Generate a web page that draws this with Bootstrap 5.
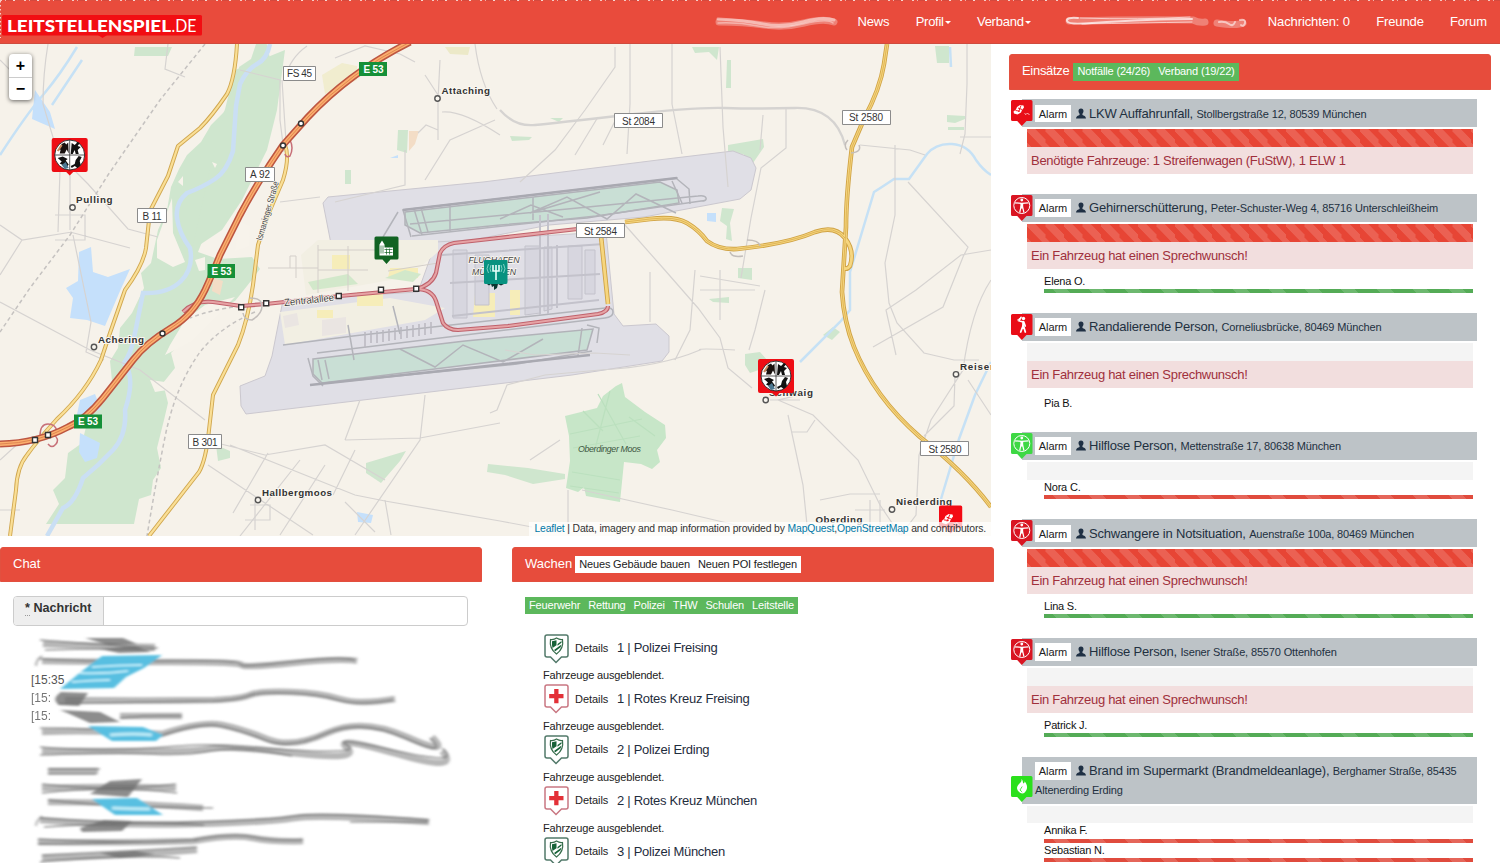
<!DOCTYPE html>
<html lang="de">
<head>
<meta charset="utf-8">
<title>Leitstellenspiel.de</title>
<meta name="viewport" content="width=device-width, initial-scale=1">
<link rel="stylesheet" href="https://cdn.jsdelivr.net/npm/bootstrap@5.3.0/dist/css/bootstrap.min.css">
<style>
body{font-family:"Liberation Sans",Arial,sans-serif;font-size:13px;line-height:1.43;color:#222;background:#fff;height:863px;overflow:hidden}
.topnav{height:44px;background:#e94b3c;border-bottom:1px solid #cf4b3e;padding:0;position:relative}
.topnav::before{content:"";position:absolute;left:0;right:0;top:0;height:1px;background:repeating-linear-gradient(90deg,#f6c9c4 0 2px,#e94b3c 2px 5px,#f3b0a8 5px 6px,#d5493d 6px 13px,#f8d6d2 13px 15px,#e0503f 15px 24px)}
.topnav .navbar-nav .nav-link{color:#fff;padding:1px 13.1px 0;line-height:44px;letter-spacing:-.12px;white-space:nowrap}
.topnav .navbar-nav .dropdown-toggle{letter-spacing:-.25px}
.topnav .dropdown-toggle::after{margin-left:1px;border-width:3.5px;vertical-align:2px}
.brandmark{display:block;width:204px;height:44px}
.leftside{width:994px}
.mapbox{width:991px;height:492px;position:relative;overflow:hidden;background:#f6f3eb}
.zoomctl{position:absolute;left:9px;top:10px;width:23px;border-radius:4px;background:#fff;box-shadow:0 1px 4px rgba(0,0,0,.6)}
.zoomctl a{display:block;height:23px;line-height:24px;text-align:center;font-weight:bold;font-size:16px;color:#000;text-decoration:none}
.zoomctl a+a{border-top:1px solid #ccc;line-height:22px}
.attrib{position:absolute;right:0;bottom:0;height:14px;line-height:14px;font-size:10.4px;letter-spacing:-.15px;padding:0 5px;background:rgba(255,255,255,.72);color:#333;white-space:nowrap}
.attrib a{color:#0078a8;text-decoration:none}
.redhead{background:#e74c3c;color:#fff;height:35.5px;border-radius:3px 3px 0 0;padding:0 12px;font-size:13px;border:1px solid #e2503f;letter-spacing:-.3px}
.wide{letter-spacing:0}
.chatcol{width:482px}
.stationcol{width:482px;margin-left:30px}
.tagrow{height:17.5px;line-height:17px;font-size:11px;white-space:nowrap;letter-spacing:-.16px}
.tagrow span{padding:0 4px;display:inline-block}
.tagwhite{background:#fff;color:#222}
.taggreen{background:#5cb85c;color:#fff}
.msgrow{margin:14px 14px 0 13px;height:30px;border:1px solid #ccc;border-radius:4px;overflow:hidden}
.msgrow .msglabel{width:90px;background:#eee;border-right:1px solid #ccc;font-weight:bold;font-size:12.6px;padding:2.4px 0 0 11px;color:#333}
.msglabel abbr{text-decoration:none;border-bottom:1px dotted #999}
.smear{display:block;margin-top:8px}
.stations{padding:18px 0 0 31px}
.station{height:50.9px}
.station .toprow{height:33px}
.station .det{font-size:11px;width:47px;padding-left:5px;flex-shrink:0;letter-spacing:-.05px}
.station .nm{font-size:13px;color:#1f2d3d;white-space:pre;letter-spacing:-.28px}
.station .hid{font-size:11px;line-height:14px;margin-top:3px;letter-spacing:-.16px}
.missioncol{width:482px;margin-left:15px;padding-top:10px}
.einsatzhead{margin-bottom:9.5px}
.mission{padding-left:13px;margin-right:14px;margin-bottom:19.7px}
.mhead{background:#bdc3c7;min-height:28.4px;position:relative;padding:5.5px 0 0 13px;color:#22303f;font-size:13px;line-height:18.6px;letter-spacing:-.19px}
.mhead.tall{height:46.8px}
.mhead .pin{position:absolute;left:-11px;top:1px}
.mhead.tall .pin{top:19px}
.mhead .alarm{display:inline-block;background:#fff;color:#222;font-size:11px;height:17.5px;line-height:18.5px;width:36px;text-align:center;margin-right:5px;vertical-align:top;letter-spacing:-.05px}
.mhead .usr{width:10px;height:11px;vertical-align:-1px;margin-right:3px}
.mhead .adr{font-size:11px;letter-spacing:-.15px}
.mbody{margin:2px 4px 0 5px}
.mbar{height:17.8px;background:#f4f4f4}
.stripe{background-image:linear-gradient(45deg,rgba(255,255,255,.15) 25%,transparent 25%,transparent 50%,rgba(255,255,255,.15) 50%,rgba(255,255,255,.15) 75%,transparent 75%)}
.mbar.stripe{background-color:#e74535;background-size:18.5px 24px}
.malert{height:27px;line-height:28px;background:#f2dede;color:#a0303c;padding-left:4px;font-size:13px;white-space:nowrap;letter-spacing:-.29px}
.malert+.veh{margin-top:4.5px}
.veh{margin-left:17px;height:19.5px;font-size:11px;line-height:14px;color:#111;letter-spacing:-.2px}
.veh i{display:block;height:4.3px;margin-top:1.2px;background-size:36px 18px}
.veh.idle{padding-top:4px}
.bar-ok{background-color:#54ab56}.bar-far{background-color:#e04b3d}
</style>
</head>
<body>
<svg width="0" height="0" class="position-absolute">
<defs>
<g id="pin"><path d="M1.500 0h18.500q1.500 0 1.500 1.500v18q0 1.500-1.500 1.500h-4.500l-4.700 5-4.600-5H1.500q-1.500 0-1.500-1.500v-18Q0 0 1.500 0z"/></g>
<g id="man" fill="none" stroke="#fff"><circle cx="10.800" cy="10.500" r="8" stroke-width="1"/><circle cx="10.800" cy="5" r="1.400" fill="#fff" stroke="none"/><path d="M4 7.800l6.800.6 6.800-.6M10.200 11l-1.500 6.500M11.400 11l1.500 6.500" stroke-width="1.200"/><path d="M9.300 8h3l-.3 5.500h-2.400z" fill="#fff" stroke="none"/></g>
<g id="crash"><path d="M2.500 11.500l2.500-2 1-2.500 3-2 3.500.5.500 2-2 2.500-1 2.500-3.500 2-3.500-1z" fill="#fff"/><path d="M4.500 10.500l4.500.7M7 8l4 1.500M10 5.500l-2.500 6.500" stroke="#f30a14" stroke-width=".9"/><path d="M13.500 13.500l1.500 1 1.500-1.500 2 2" stroke="#fff" stroke-width=".7" fill="none"/></g>
<g id="bat" fill="none" stroke="#fff" stroke-linecap="round"><circle cx="12.500" cy="4.500" r="1.700" fill="#fff" stroke="none"/><path d="M12 7.500v5.500M12 8L8 6.800l2-3.500M12.800 8l1.400 4" stroke-width="1.700"/><path d="M12 12l-2.300 6M12.500 12l1.800 6" stroke-width="1.800"/><path d="M9.500 4L6.500 6" stroke-width="1"/></g>
<g id="flame"><path d="M10.500 3c2 2.500 1 3.500 2 4.500 1-.5 1.200-1.300 1-2.300 3 3.300 4 8-.3 11.800-1 .6-3 .5-4.200-.3-4-3-3.500-6.200-1.200-8.500C9.500 6.500 11 5.500 10.500 3z" fill="#fff"/><path d="M11.200 10.500l-2.200 3.500 2.200 2" stroke="#2be01c" stroke-width=".8" fill="none"/></g>
<symbol id="usr" viewBox="0 0 14 14"><path d="M7 0c2.300 0 3.700 1.600 3.500 4-.2 1.700-.8 2.700-1.500 3.500v1.700c1.800.8 4.800 1.500 5 4.800H0c.2-3.300 3.200-4 5-4.800V7.500C4.300 6.700 3.700 5.700 3.500 4 3.300 1.600 4.700 0 7 0z" fill="#1f3044"/></symbol>
<g id="fire"><path d="M2 0h32q2 0 2 2v30q0 2-2 2H21.500L18 37.500 14.500 34H2q-2 0-2-2V2Q0 0 2 0z" fill="#ee0d14"/><circle cx="18" cy="17" r="15" fill="#fff" stroke="#222" stroke-width=".9"/><path d="M18 2v30M3 17h30" stroke="#333" stroke-width=".8"/><path d="M10 6l3-1.500 1.500 2 2-2 .5 11-2-4-2 4H8l1-4-2 1 1-3z" fill="#18110e"/><path d="M6 13l4-6" stroke="#c98a5c" stroke-width="2"/><path d="M20 5l3 2 3-3 2 1-2 3 3 1-3 3 1 4h-3l-1-4-2 4h-2z" fill="#111"/><path d="M6 20l5-1.500 5 2.500-2 1.500 3 4-3 4-2-3-4-2 2-2z" fill="#111"/><path d="M10 27l4-3 3 6-4 1z" fill="#4c7892"/><path d="M19 28l4-2 1-4 3-4 3 1-2 4 1 4-3 3-3-2-3 2z" fill="#111"/></g>
</defs>
</svg>

<nav class="navbar topnav navbar-expand flex-nowrap">
<a class="brandmark" href="#" aria-label="Leitstellenspiel.de"><svg width="204" height="44"><rect x="2" y="15" width="200" height="20.500" rx="1.500" fill="#f20d12"/><path d="M98 35h9l-4.500 3z" fill="#f20d12"/><g font-family="Lato,sans-serif" font-size="17.500" fill="#fff"><text x="7" y="31.500" font-weight="900" textLength="164" lengthAdjust="spacingAndGlyphs">LEITSTELLENSPIEL</text><text x="171.500" y="31.500" textLength="25" lengthAdjust="spacingAndGlyphs">.DE</text></g><path d="M.500 1v37" stroke="#f8cfc9" stroke-dasharray="1.500 2.500"/></svg></a>
<svg class="ms-auto flex-shrink-0" width="124" height="20" fill="none" stroke="#fff" stroke-linecap="round"><path d="M4 10q25 0 45 3t40-2 30-1" stroke-width="7" opacity=".3"/><path d="M3 7q25 1 45 5t40-2 31-2" stroke-width="3" opacity=".45"/><path d="M3 11q20-1 40 3t45-2 30-1" stroke-width="1.500" opacity=".4"/></svg>
<ul class="navbar-nav" style="margin-left:5px">
<li class="nav-item"><a class="nav-link" href="#">News</a></li>
<li class="nav-item"><a class="nav-link dropdown-toggle" href="#">Profil</a></li>
<li class="nav-item"><a class="nav-link dropdown-toggle" href="#">Verband</a></li>
</ul>
<svg class="flex-shrink-0" style="margin:0 5px 0 18px" width="188" height="20" fill="none" stroke="#fff" stroke-linecap="round"><path d="M7 9q70-2 124-1 6 3 12 2M155 11q20 3 26 0" stroke-width="7" opacity=".3"/><path d="M16 6Q4 5 5 9t25 2q60-4 100-4" stroke-width="2" opacity=".7"/><path d="M20 12q60-1 110-2M18 6q60 2 110-1" stroke-width="1" opacity=".6"/><path d="M157 10q6-1 10 2t6-2M178 8q6-1 5 3t-4 2" stroke-width="2" opacity=".55"/></svg>
<ul class="navbar-nav">
<li class="nav-item"><a class="nav-link wide" href="#">Nachrichten: 0</a></li>
<li class="nav-item"><a class="nav-link" href="#">Freunde</a></li>
<li class="nav-item"><a class="nav-link" href="#">Forum</a></li>
</ul>
</nav>

<div class="d-flex">
<main class="leftside flex-shrink-0">
<div class="mapbox">
<svg width="991" height="492" viewBox="0 44 991 492" font-family="Liberation Sans,Arial,sans-serif">
<rect y="44" width="991" height="492" fill="#f6f2ea"/>
<!-- flood plain and woods -->
<g fill="#cfe6ce">
<path d="M256 44l-5 15-12 8 2 15-12 3 4 14-10 14-12 12-10 17-14 13-8 14-8 18-4 23-9 20-7 33-10 10 3 15-12 25-12 15-2 20-8 13 2 20-10 22-12 8-8 32-14 10-3 25-12 12 6 14-13 20h88l5-25 12-4 2-15 8-12-4-20 7-28 4-17-5-20 12-15-4-15 20-20 2-15 22-8 20-9 12-15 13-17-8-12-34 2-20-7 10-25 15-20 13-8 9-17-4-14-12 3 4-18 16-12 6-18-3-15 12-18-4-12 10-20-4-17 14-12 2-14-3-12 6-12-4-14 8-16z"/>
<path d="M235 70l50-20-8 60-10 40-25 50-20 30-30 20 20-90z"/>
<path d="M135 47h37l-4 9h-34zM398 130h10l-1 23-10-3zM345 170h6v14h-6zM692 47h27l-2 13-8-8-14 1zM727 60h4v28h-5zM728 145l35-6 1 8-11 16-10-9-15-1zM722 208l12 1-4 14 2 18-6-2 1-13-7-5zM738 268h14v12l-14-2zM745 354l15-2 8 9-6 8-12 4-5-8zM366 463l40-12-6 10-19 22-15-10zM216 445l14 6v7l-12 3zM947 115l18 1v3l-10 4-8-1zM948 127h16v3h-16zM935 46h14v17h-12zM823 335l10-8 7 5-8 8zM550 118h13l-4 4zM510 136l22 1-3 3-17 1z"/>
<path d="M565 416l32-8 6-12 13-10 6-3 3 14 20 15 20 13 1 13-9 12 3 12-8 7-11-5-17-2-4 40-34-6-2-9-6 5-12-4 4-27-1-25-4-20z" fill="#c7e6c8"/>
<path d="M488 464l40 4 37 6v5l-32 5-28-9-18-3zM709 299l20-2v6l-16-1z"/>
</g>
<path d="M409 131h10l-4 13-6 7zM213 278l10 3-3 14-8-4z" fill="#f3ddc6"/>
<path d="M322 75l20-12 15 3v14l-32 14z" fill="#f1edcf"/><path d="M445 47l25 0-2 8-18-1z" fill="#ece9c8"/>
<path d="M570 434l72-15m-69 29 67-12m-68 36 48 8m-50 6 49 7m-21-99 28 50m-16-53-16 62m35-36 26 19M583 411l20 20" stroke="#bbe0be" stroke-width="1.200"/>
<g fill="#f7f3eb"><path d="M157 240l15-42 1 35 12 29-12 5-16-9zM240 222l10 4-1 20-14 5zM170 345l15-25 20-15 30-8-45 45-25 13zM195 260l10-3v13l-6 1zM178 182l5-6v10zM212 162l5 2-2 4zM150 380l15 2 2 8-12 2z"/></g>
<!-- water -->
<g fill="none" stroke="#cadff4"><path d="M270 44q-3 15-13 20t-17 20l-4 22-3 45q-6 20-18 28t-28 14q-12 10-10 25t13 30q4 20-9 33t-38 12l-9 45q-3 15-10 25 12 14 1 47 2 25-12 40t-30 28q-8 25-20 30L47 536" stroke-width="4.500"/>
<path d="M77 47Q60 75 43 95T0 155M82 60l-30 45M991 175q-8-5-15-15-8-15-24-16t-25 10l-18 25h-15q-15 10-20 13l-12 40-12 40v38l-10 12-40 40M991 362l-16 33-16 44-18 60M950 47l1 20" stroke="#c6e1f5" stroke-width="2.500"/></g>
<path d="M79 252l12-5 2 25 15 5 22-8-10 22-15 35-18-6-17-2 3-20-7-10 12-7zM35 90l15 22 5 17-23-10zM80 400l15-6 6 16-13 2-12 7zM80 433l20 10-3 15-12 4-6-10zM357 512l16 3-2 8-13-1zM707 213h9v9l-9-1zM390 158l8-3v3z" fill="#c5e0fb"/>
<!-- airport aprons -->
<g stroke="#cbc8cf" fill="#e0dfe6"><path d="M323 203l5-6 155-15 175-22 75-9 18 7 5 10-5 22-11 9-96 18-95 8-117 23-99 6z"/><path d="M283 300l135-8 18-50 170-10 8 82 9 12 33-2 13 12v16l-7 9-90 14-326 39-5-8-1-20 25-10 7-20z"/></g>
<g fill="#f2efe3"><path d="M318 240h120v12l-30 25-102 18-5-40zM280 312l110-14 55 10-20 12-140 25z"/></g>
<path d="M332 255h18v14h-18zM390 268h28v10h-30zM357 292h26v14h-26zM317 310h16v8h-16zM475 293h20v24h-22zM510 290h10v25h-10z" fill="#f6edb9"/>
<path d="M283 316l14-3 2 12-14 3zM322 320l24-3v16l-24 3z" fill="#eae5e2"/>
<path d="M308 282l40-8 10 10-45 6zM385 278l20-8 16 4-8 8z" fill="#d2e8ca"/>
<path d="M318 245v48m0-43h65m-65 20h50m-20-24v45m40-20 50-8M318 268l-50 0M290 268v-12h6v22" fill="none" stroke="#d4cfca"/>
<g fill="#c9dfd5" stroke="#b1b2b8" stroke-width="1.500"><path d="M405 212l255-30 17 8 2 13-92 15-87 7-80 8-15-8z"/><path d="M313 359l152-18 128-12-6 21-120 15-145 18-9-9z"/></g>
<g fill="none" stroke="#b3b4ba" stroke-width="1.500">
<path d="M402 210l276-32M412 236l184-20 105-15q6 0 5-3t-8-2l-110 11-178 17M403 210l8 27m3-28 8 26m-1-27 7 24M398 212l-15 25M600 192l-70 21 37-16 40 22 29-25 40 19M672 181l10 22m-5-24 12 10 1 15M533 197v23M450 204v27M500 219l31-14 32 12"/>
<path d="M283 345l70-9 80-9 172-19q8-1 8 4t-8 6l-288 35M317 384l200-20 75-13M308 358l5 18 10 10m-5-26 4 20m3-20 4 19M400 349l35 18 28-22 40 17 40-23M587 325l12 3-2 15m-15-15-4 28M354 360l-6-35M400 334l-7-28"/>
</g>
<path d="M310 385l280-30M403 210l274-32" stroke="#a9a9b1" stroke-width="2.500"/>
<g stroke="#c3c2cb" fill="#d7d6df"><path d="M453 250h14v68h-14zM475 255h14v50h-14zM525 246h15v67l-15 2zM544 247h8v62l-8 2zM568 246h14v53h-14zM585 250h10v44h-10z"/><path d="M540 215v100M548 214v100M442 255l162-11M450 283l150-9M452 316l147-16M557 245v63" fill="none" stroke-width="2"/></g>
<path d="M365 332v16m6-17v12m6-12v12m6-13v12m6-13v12m6-13v12m6-13v12m6-13v12m6-13v12m6-13v12m6-13v12m6-13v12" stroke="#b9b8c0" stroke-width="1.500"/>
<!-- minor roads -->
<g fill="none" stroke="#d6d3d1" stroke-width="1.200">
<path d="M48 44q-5 30-5 60l15 50 30 30 40 45 30 8M0 225l22 15 50-8M22 240L0 275M60 170l-2 62M70 165v65m-15-15h30v25H55M70 232l60 16M73 235l18 87-5 30 18 8M0 302l90 48 50 20 65 50M240 70l40 10v40l4 32M0 60l25 25M168 44l-3 25 20 8M282 80l4 62M285 78q5-20 22-32M335 58l30-12 35 8M400 54l15 8M438 98v42M438 130l-12-5-8 8M442 112q20-2 58 23M440 60l-2 40M405 150v35l-70 17M475 44q5 40 22 65M425 180l25-40 45-20M425 75l13 20M230 445l125 50 30 6 115 20 32 6M208 465l45 30 60 40M205 440l60 15 60-10 60 35M268 453l-35 60M300 460l-60 76M325 465l-45 70M355 450l-22 45M355 535l65-95 5-45M345 440l15-40M345 440l75-2 80-15M385 500l6 35M280 202l40-5M615 47v20l-30 43-30 40-35 32M630 44v60l-3 50M672 44v60l10 50M720 47l3 80 5 60M786 108v40l-25 20-10 50-10 60M763 115l-3 35M575 155l23-38M603 145l15-30M625 225l38 43 35 40 22 30 8 30 24 20M735 350q-40-2-35 0-40 17-100 20l-55 5-38 10-10 25-7 3M895 145v70l-10 48 4 40 8 20 27 30 30 7 25 0M908 182l60 65-5 10-20 50-70 40M967 44v40l-2 50-5 20M960 137h31M991 250l-30 5-45 35-30 20 10 45M991 280q-20 30-28 90l-32 50-12 35-3 60-15 20M955 376l-1 30-30 30M968 380l23 35M800 395l-22 5 35 15 45 45 22 45 20 30M770 400l30 0M788 415l15 70 5 50M860 145l50 5 15 5M695 270l-5 60-15 30M765 290l-10 40-6 20M568 490l0 45M582 490l90 20 85 20M345 502l30 30M0 460l22-20M0 510h20M650 272v50M505 350l30 5 60-2 35 2"/>
<path d="M820 500l30-6h30M880 500v30h-30v-10m5-10h30m-15-10v30M250 505h20v15h-25m10-20v30M700 276l60 10M700 290h55M720 270v50M815 420l-8 12h-15M530 460l30-20"/>
</g>
<path d="M500 110q15 17 35 15t90-10 100-7 70 0 50 37" fill="none" stroke="#d5d3d1" stroke-width="2.300"/>
<g fill="none" stroke="#c5c2c0" stroke-width="1.500" stroke-dasharray="4 3"><path d="M205 44L160 100 108 175 70 235 30 288 0 332M255 312q-35 15-55 40-25 35-35 85T147 536M240 306q-30 4-50 12"/></g>
<!-- main roads -->
<g fill="none" stroke-linejoin="round">
<path d="M237 44q-2 35-10 50-15 22-27 34l-22 18-10 30-18 35-4 37q-3 18-21 42l-15 43-9 27q-15 32-44 59-20 22-30 36-10 12-11 35l-6 46M285 145q5 12-2 35l-15 35-10 30-5 40q-5 35-15 60l-25 50-4 35q-3 30-10 42l-50 64" stroke="#d0a750" stroke-width="4"/>
<path d="M887 44l-3 20q-4 25-20 55l-12 28q-6 50-6 80l-4 65q2 30 12 55 20 50 66 90 45 35 71 70M625 222l25-3q25-3 37 4t20 18q12 9 30 8 50-5 78-17 20-7 30 6t5 28q-3 4-6 2M601 236l7 68" stroke="#d0a345" stroke-width="4.600"/>
<path d="M237 44q-2 35-10 50-15 22-27 34l-22 18-10 30-18 35-4 37q-3 18-21 42l-15 43-9 27q-15 32-44 59-20 22-30 36-10 12-11 35l-6 46M285 145q5 12-2 35l-15 35-10 30-5 40q-5 35-15 60l-25 50-4 35q-3 30-10 42l-50 64" stroke="#fadf96" stroke-width="2.200"/>
<path d="M887 44l-3 20q-4 25-20 55l-12 28q-6 50-6 80l-4 65q2 30 12 55 20 50 66 90 45 35 71 70M625 222l25-3q25-3 37 4t20 18q12 9 30 8 50-5 78-17 20-7 30 6t5 28q-3 4-6 2M601 236l7 68" stroke="#f6d67f" stroke-width="2.800"/>
<path d="M625 222l25-3q25-3 37 4t20 18q12 9 30 8 50-5 78-17 20-7 30 6M887 44l-3 20q-4 25-20 55l-12 28q-6 50-6 80l-4 65q2 30 12 55 20 50 66 90 45 35 71 70" stroke="#d6a747" stroke-width=".7"/>
<path d="M183 312q12-12 30-10l28 4 25-2 74-8 76-7q16-4 20-16l4-20q4-8 14-10l150-17M416 289q16 0 20 12l7 22q5 7 15 7l50-4 90-12q10-2 10-8" stroke="#c0626c" stroke-width="4.200"/>
<path d="M183 312q12-12 30-10l28 4 25-2 74-8 76-7q16-4 20-16l4-20q4-8 14-10l150-17M416 289q16 0 20 12l7 22q5 7 15 7l50-4 90-12q10-2 10-8" stroke="#e6a3a5" stroke-width="2"/>
<path d="M290 140q4 8 0 16-4 2-5-2M40 436q0-12 8-12t9 8m-9 12q4 5 8 0t-3-10" stroke="#c77078" stroke-width="1.500"/>
<path d="M250 298q12 0 12 8t-10 14q-8 0-9-7M747 240q12 0 13 6m-30 6q2 6 13 4M848 140q-5 5-1 10m12-5q3 7-8 8" stroke="#c3bebb" stroke-width="1.500"/>
<path d="M410 42q-60 30-102 75l-25 28q-25 36-43 70l-20 40q-8 20-15 35-12 25-34 38-25 15-38 32l-30 38q-18 22-35 29-30 16-68 17" stroke="#bd5641" stroke-width="7"/>
<path d="M410 42q-60 30-102 75l-25 28q-25 36-43 70l-20 40q-8 20-15 35-12 25-34 38-25 15-38 32l-30 38q-18 22-35 29-30 16-68 17" stroke="#fbae6d" stroke-width="3.900"/>
<path d="M410 42q-60 30-102 75l-25 28q-25 36-43 70l-20 40q-8 20-15 35-12 25-34 38-25 15-38 32l-30 38q-18 22-35 29-30 16-68 17" stroke="#d87b4b" stroke-width=".8"/>
</g>
<g fill="#fff" stroke="#333" stroke-width="1.400"><circle cx="301" cy="123.500" r="2.500"/><circle cx="283" cy="145.500" r="2.500"/><circle cx="162.500" cy="333.500" r="2.500"/><path d="M238.700 304.700h5v5h-5zM263.700 300.700h5v5h-5zM336.300 293.500h5v5h-5zM378.500 287.300h5v5h-5zM413.700 286.300h5v5h-5zM32.500 437.500h5v5h-5zM45.500 432.500h5v5h-5z"/><g fill="#f9f6ef" stroke="#555"><circle cx="437.500" cy="98.500" r="2.700"/><circle cx="72.500" cy="207.500" r="2.700"/><circle cx="94" cy="347" r="2.700"/><circle cx="258" cy="500" r="2.700"/><circle cx="765.700" cy="400" r="2.700"/><circle cx="956" cy="374.300" r="2.700"/><circle cx="892" cy="509.500" r="2.700"/></g></g>
<!-- shields -->
<g fill="#fff" stroke="#8b8b8b"><path d="M283.500 66.500h32v14h-32zM245.500 167.500h29v14h-29zM137.500 208.500h29v14h-29zM188.500 434.500h33v14h-33zM614.500 113.500h48v14h-48zM842.500 110.500h48v14h-48zM576.500 223.500h48v14h-48zM920.500 441.500h48v14h-48z"/></g>
<g fill="#159038"><path d="M359 62h28v14h-28zM207.500 264h27.500v14h-27.500zM74 414.500h28v14h-28z"/></g>
<g font-size="10" text-anchor="middle" fill="#333"><text x="299.500" y="77" textLength="25">FS 45</text><text x="260" y="178" textLength="20">A 92</text><text x="152" y="219.500" textLength="19">B 11</text><text x="205" y="445.500" textLength="25">B 301</text><text x="638.500" y="124.500" textLength="33">St 2084</text><text x="866" y="121" textLength="34">St 2580</text><text x="600.500" y="234.500" textLength="33">St 2584</text><text x="945" y="452.500" textLength="33">St 2580</text>
<g fill="#fff" font-weight="bold"><text x="373.500" y="72.500" textLength="20">E 53</text><text x="221.500" y="275" textLength="20">E 53</text><text x="88" y="425.300" textLength="20">E 53</text></g></g>
<g font-size="9.800" font-weight="bold" fill="#333" stroke="#faf7f0" stroke-width="2" paint-order="stroke"><text x="441.500" y="94" textLength="48.500">Attaching</text><text x="76" y="203" textLength="36.500">Pulling</text><text x="98" y="343" textLength="46">Achering</text><text x="262" y="495.500" textLength="70">Hallbergmoos</text><text x="769" y="395.500" textLength="44">Schwaig</text><text x="960" y="370" textLength="36">Reisen</text><text x="896" y="505" textLength="56">Niederding</text><text x="815.500" y="523" textLength="47">Oberding</text></g>
<g fill="#444" stroke="#faf7f0" stroke-width="1.500" paint-order="stroke"><text transform="translate(262 241) rotate(-74)" font-size="9" textLength="61" lengthAdjust="spacingAndGlyphs">Ismaninger Straße</text><text transform="translate(284.500 306) rotate(-6)" font-size="10" textLength="50" lengthAdjust="spacingAndGlyphs">Zentralallee</text><g font-style="italic" font-size="8.800"><text x="468.500" y="263" textLength="51">FLUGHAFEN</text><text x="472" y="275" textLength="44">MÜNCHEN</text><text x="578" y="452" textLength="63" stroke="none" fill="#3d5742">Oberdinger Moos</text></g></g>
<!-- markers -->
<use href="#fire" x="51.700" y="138"/><use href="#fire" x="758" y="359"/>
<g transform="translate(374.500 236.500)"><path d="M1.500 0h21q1.500 0 1.500 1.500v20q0 1.500-1.500 1.500H16l-4 4.500L8 23H1.500Q0 23 0 21.500v-20Q0 0 1.500 0z" fill="#116322"/><path d="M5 19V8l2.500-4L10 8v3h8.500v8z" fill="#fff"/><path d="M6.500 9v8m2-8v8M10 13h8m-8 3h8m-6-4v6m3-6v6" stroke="#116322" stroke-width=".7"/></g>
<g transform="translate(484 260)"><path d="M1 0h21.500q1 0 1 1v21q0 2-1.500 2H1.500Q0 24 0 22.500V1q0-1 1-1z" fill="#079280"/><path d="M9 5v6h6V5M12 5v15" fill="none" stroke="#e8fffb" stroke-width="1.600"/><path d="M7 5q-2 4 0 7M4.500 4q-3 5 0 9M17 5q2 4 0 7M19.500 4q3 5 0 9" fill="none" stroke="#7fd0c5"/><path d="M3 24l2 1.500L7 24l1 3 2-1 0 4 3-2 1-4 3 1.500 3-1.500z" fill="#0b3732"/></g>
<g transform="translate(939 505.500)" fill="#f30a14"><use href="#pin" transform="scale(1.080)"/><use href="#crash" transform="translate(0 3) scale(1.080)"/></g>
</svg>
<div class="zoomctl"><a href="#">+</a><a href="#">−</a></div>
<div class="attrib"><a href="#">Leaflet</a> | Data, imagery and map information provided by <a href="#">MapQuest</a>,<a href="#">OpenStreetMap</a> and contributors.</div>
</div>

<div class="d-flex" style="padding-top:10.500px">
<section class="chatcol">
<div class="redhead wide d-flex align-items-center">Chat</div>
<div class="msgrow d-flex"><label class="msglabel"><abbr>*</abbr> Nachricht</label><div class="flex-grow-1"></div></div>
<svg class="smear" width="482" height="230" viewBox="0 634 482 230" font-family="Liberation Sans,Arial,sans-serif">
<defs><filter id="soft" x="-5%" y="-5%" width="110%" height="110%"><feGaussianBlur stdDeviation="1.800 .8"/></filter></defs>
<g font-size="12" fill="#555"><text x="31" y="684">[15:35</text><text x="31" y="702" opacity=".8">[15:</text><text x="31" y="720" opacity=".8">[15:</text></g>
<g filter="url(#soft)" fill="none">
<g stroke="#8a8a8a" stroke-width="6.500" opacity=".62"><path d="M43 644q50 2 112 3M42 661q60 1 130 1t70 3 50-2 65-2M65 700q80 1 150 0 25-1 35-5t40-3 50 7 55 0M120 716h62M42 732q50-2 120 2 40-13 60-9t45 14 60-6 80 4 25 0M42 751q60 0 110 0t60-3 80 5 55-5 50 6 45-3M48 771h50M42 788q70-2 134 0M48 802q70 0 155 6M40 820q80 6 155 4t100-6 134 4M38 842q90 1 155-1 40-7 60-3t50 3M42 858q80-2 155-8"/></g>
<g stroke="#666" opacity=".65" stroke-width="1.600">
<path d="M40 640q50 4 118 8M45 650q60-2 110 0M42 656q-6 4-6 10M40 659q60 3 130 2t70 3 50-2 65-2M58 704q80-2 155-3 25-1 35-5t40-3 50 7 55 0M120 718q30-3 62-2M40 728q60 0 110 5M160 736q40-14 60-10t45 14 60-6 80 4 25 0M40 747q60 5 112 1t60-3 80 5 55-5 50 6 45-3M40 755q80-3 112-1t60-3 80 5M48 769h52M48 774h48M42 784q70 8 134 0M42 793q70-8 135 0M48 800q60 7 165 8M42 816q-6 5-6 10M40 818q80 6 155 4t100-6 134 4M350 822h78M44 827q90-6 160-2M38 839q90 5 155 1 40-7 60-3t50 3M38 844q90-1 160-4M42 855q90-4 155-8M40 862q90-8 140-4"/>
</g>
<g fill="#6f6f6f" opacity=".8"><path d="M85 638h38l14 6-28 1zM100 649l35-3 16 6-32 1zM60 692l28 1-9 13-20-1q-8-6 1-12zM60 710l40 2 20 10-30 1-25-11zM110 781l32-2-14 18-38-3zM80 828l24-8 28 1-10 10-40 1zM100 853l35-2 20 3-35 4z"/></g>
<path d="M102 656l60-1-18 13-18 9-12 11-54 1 22-18z" fill="#59bfe1"/>
<path d="M92 667q30-2 50-2M80 673q25 1 48-2M72 682q25-2 38-2" stroke="#c2effb" stroke-width="2"/>
<path d="M88 726l55 1 20 8-7 6-44 0zM92 799l45-1 26 17-48 0z" fill="#59bfe1"/><path d="M110 735q25-2 42 0M112 808q20 1 38 1" stroke="#b8e8f5" stroke-width="3.500"/>
</g></svg>
</section>

<section class="stationcol">
<div class="redhead d-flex align-items-center"><span class="wide">Wachen</span><div class="tagrow tagwhite" style="margin-left:3px"><span>Neues Gebäude bauen</span><span>Neuen POI festlegen</span></div></div>
<div class="d-flex" style="padding:14.500px 0 0 13px"><div class="tagrow taggreen"><span>Feuerwehr</span><span>Rettung</span><span>Polizei</span><span>THW</span><span>Schulen</span><span>Leitstelle</span></div></div>
<svg width="0" height="0" class="position-absolute"><defs>
<symbol id="pol" viewBox="0 0 27 32"><path d="M4 2h19q2 0 2 2v18q0 2-2 2h-4.500L13 29.500 7.500 24H4q-2 0-2-2V4q0-2 2-2z" fill="#fff" stroke="#52796a" stroke-width="1.500"/><path d="M13.500 5q3 2 6 1.500 1.500 9-6 14.500Q6 15.500 7.500 6.500 11 7 13.500 5z" fill="#fff" stroke="#376d4c" stroke-width="1.200"/><path d="M9 8.300l4.500-1v5L9.500 15q-.8-3-.5-6.700zM11 17l7.500-5.500-.9 2.800-5.300 4zM14.500 11l4-3v1.800l-4 3z" fill="#176338"/></symbol>
<symbol id="rk" viewBox="0 0 27 32"><path d="M4 2h19q2 0 2 2v18q0 2-2 2h-4.500L13 29.500 7.500 24H4q-2 0-2-2V4q0-2 2-2z" fill="#fff" stroke="#c97782" stroke-width="1.500"/><path d="M11.200 6h4.300v5h5v4.300h-5v5h-4.300v-5h-5V11h5z" fill="#e33037"/></symbol>
</defs></svg>
<div class="stations">
<div class="station"><div class="toprow d-flex align-items-center"><svg width="27" height="32"><use href="#pol"/></svg><span class="det">Details</span><span class="nm">1 | Polizei Freising</span></div><div class="hid">Fahrzeuge ausgeblendet.</div></div>
<div class="station"><div class="toprow d-flex align-items-center"><svg width="27" height="32"><use href="#rk"/></svg><span class="det">Details</span><span class="nm">1 | Rotes Kreuz Freising</span></div><div class="hid">Fahrzeuge ausgeblendet.</div></div>
<div class="station"><div class="toprow d-flex align-items-center"><svg width="27" height="32"><use href="#pol"/></svg><span class="det">Details</span><span class="nm">2 | Polizei Erding</span></div><div class="hid">Fahrzeuge ausgeblendet.</div></div>
<div class="station"><div class="toprow d-flex align-items-center"><svg width="27" height="32"><use href="#rk"/></svg><span class="det">Details</span><span class="nm">2 | Rotes Kreuz München</span></div><div class="hid">Fahrzeuge ausgeblendet.</div></div>
<div class="station"><div class="toprow d-flex align-items-center"><svg width="27" height="32"><use href="#pol"/></svg><span class="det">Details</span><span class="nm">3 | Polizei München</span></div></div>
</div>
</section>
</div>
</main>

<aside class="missioncol flex-shrink-0">
<div class="redhead einsatzhead d-flex align-items-center">Einsätze<div class="tagrow taggreen ms-1"><span>Notfälle (24/26)</span><span>Verband (19/22)</span></div></div>

<article class="mission"><div class="mhead"><svg class="pin" width="22" height="27"><use href="#pin" fill="#e90d17"/><use href="#crash"/></svg><span class="alarm">Alarm</span><svg class="usr"><use href="#usr"/></svg>LKW Auffahrunfall, <span class="adr">Stollbergstraße 12, 80539 München</span></div>
<div class="mbody"><div class="mbar stripe"></div><div class="malert">Benötigte Fahrzeuge: 1 Streifenwagen (FuStW), 1 ELW 1</div></div></article>

<article class="mission"><div class="mhead"><svg class="pin" width="22" height="27"><use href="#pin" fill="#d91522"/><use href="#man"/></svg><span class="alarm">Alarm</span><svg class="usr"><use href="#usr"/></svg>Gehirnerschütterung, <span class="adr">Peter-Schuster-Weg 4, 85716 Unterschleißheim</span></div>
<div class="mbody"><div class="mbar stripe"></div><div class="malert">Ein Fahrzeug hat einen Sprechwunsch!</div><div class="veh">Elena O.<i class="stripe bar-ok"></i></div></div></article>

<article class="mission"><div class="mhead"><svg class="pin" width="22" height="27"><use href="#pin" fill="#e90d17"/><use href="#bat"/></svg><span class="alarm">Alarm</span><svg class="usr"><use href="#usr"/></svg>Randalierende Person, <span class="adr">Corneliusbrücke, 80469 München</span></div>
<div class="mbody"><div class="mbar"></div><div class="malert">Ein Fahrzeug hat einen Sprechwunsch!</div><div class="veh idle">Pia B.</div></div></article>

<article class="mission"><div class="mhead"><svg class="pin" width="22" height="27"><use href="#pin" fill="#3ed844"/><use href="#man"/></svg><span class="alarm">Alarm</span><svg class="usr"><use href="#usr"/></svg>Hilflose Person, <span class="adr">Mettenstraße 17, 80638 München</span></div>
<div class="mbody"><div class="mbar"></div><div class="veh">Nora C.<i class="stripe bar-far"></i></div></div></article>

<article class="mission"><div class="mhead"><svg class="pin" width="22" height="27"><use href="#pin" fill="#d91522"/><use href="#man"/></svg><span class="alarm">Alarm</span><svg class="usr"><use href="#usr"/></svg>Schwangere in Notsituation, <span class="adr">Auenstraße 100a, 80469 München</span></div>
<div class="mbody"><div class="mbar stripe"></div><div class="malert">Ein Fahrzeug hat einen Sprechwunsch!</div><div class="veh">Lina S.<i class="stripe bar-ok"></i></div></div></article>

<article class="mission"><div class="mhead"><svg class="pin" width="22" height="27"><use href="#pin" fill="#d91522"/><use href="#man"/></svg><span class="alarm">Alarm</span><svg class="usr"><use href="#usr"/></svg>Hilflose Person, <span class="adr">Isener Straße, 85570 Ottenhofen</span></div>
<div class="mbody"><div class="mbar"></div><div class="malert">Ein Fahrzeug hat einen Sprechwunsch!</div><div class="veh">Patrick J.<i class="stripe bar-ok"></i></div></div></article>

<article class="mission mb-0"><div class="mhead tall"><svg class="pin" width="22" height="27"><use href="#pin" fill="#2be01c"/><use href="#flame"/></svg><span class="alarm">Alarm</span><svg class="usr"><use href="#usr"/></svg>Brand im Supermarkt (Brandmeldeanlage), <span class="adr">Berghamer Straße, 85435 Altenerding Erding</span></div>
<div class="mbody"><div class="mbar"></div><div class="veh">Annika F.<i class="stripe bar-far"></i></div><div class="veh">Sebastian N.<i class="stripe bar-far"></i></div></div></article>
</aside>
</div>
<script src="https://cdn.jsdelivr.net/npm/bootstrap@5.3.0/dist/js/bootstrap.bundle.min.js"></script>
</body>
</html>
